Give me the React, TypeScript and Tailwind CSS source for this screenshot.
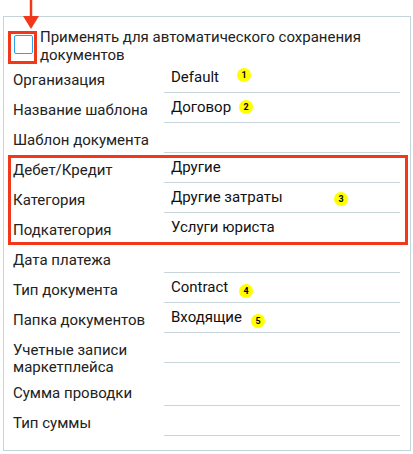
import React from 'react'

const rows: { label: string; value?: string }[] = [
  { label: 'Организация', value: 'Default' },
  { label: 'Название шаблона', value: 'Договор' },
  { label: 'Шаблон документа' },
  { label: 'Дебет/Кредит', value: 'Другие' },
  { label: 'Категория', value: 'Другие затраты' },
  { label: 'Подкатегория', value: 'Услуги юриста' },
  { label: 'Дата платежа' },
  { label: 'Тип документа', value: 'Contract' },
  { label: 'Папка документов', value: 'Входящие' },
  { label: 'Учетные записи маркетплейса' },
  { label: 'Сумма проводки' },
  { label: 'Тип суммы' },
]

const badges = [
  { n: 1, x: 244, y: 75 },
  { n: 2, x: 246, y: 107 },
  { n: 3, x: 341, y: 199 },
  { n: 4, x: 246, y: 291 },
  { n: 5, x: 258, y: 321 },
]

const Badge = ({ n, x, y }: { n: number; x: number; y: number }) => (
  <div
    className="absolute w-[14px] h-[14px] rounded-full bg-[#ffff00] flex items-center justify-center text-[9px] font-bold text-black leading-none"
    style={{ left: x - 7, top: y - 7 }}
  >
    {n}
  </div>
)

const App = () => {
  return (
    <div className="relative w-[413px] h-[454px] bg-white pt-[16px] pl-[3px] font-['Roboto',sans-serif] text-[15px] text-[#222]">
      {/* PANEL */}
      <div className="w-[408px] border border-[#c5d5dc] pt-[11px] pb-[14px]">
        {/* CHECKBOX */}
        <div className="flex items-start pl-[10px] pr-[10px] h-[35px]">
          <div className="mt-[7px] w-[19px] h-[19px] shrink-0 rounded-[2px] border-[1.5px] border-[#2aa4e6] bg-white" />
          <p className="ml-[7px] leading-[18px]">
            Применять для автоматического сохранения документов
          </p>
        </div>

        {/* FIELDS */}
        {rows.map((row) => (
          <div key={row.label} className="flex items-start">
            <div className="w-[160px] shrink-0 pl-[9px] pr-[4px] pt-[9px] leading-[17px]">
              {row.label}
            </div>
            <div className="flex-1 mr-[10px] h-[30px] border-b border-[#c8d6dc] flex items-center pl-[7px] pb-[1px] text-[#111]">
              {row.value}
            </div>
          </div>
        ))}
      </div>

      {/* ANNOTATIONS */}
      <svg className="absolute left-[22px] top-0" width="18" height="30" viewBox="0 0 18 30">
        <line x1="9" y1="0" x2="9" y2="20" stroke="#f2381b" strokeWidth="2.5" />
        <polygon points="1,16 17,16 9,29" fill="#f2381b" />
      </svg>
      <div className="absolute left-[8px] top-[31px] w-[29px] h-[33px] border-[3px] border-[#f2381b]" />
      <div className="absolute left-[8px] top-[155px] w-[400px] h-[90px] border-[3px] border-[#f2381b]" />
      {badges.map((b) => (
        <Badge key={b.n} {...b} />
      ))}
    </div>
  )
}

export default App
